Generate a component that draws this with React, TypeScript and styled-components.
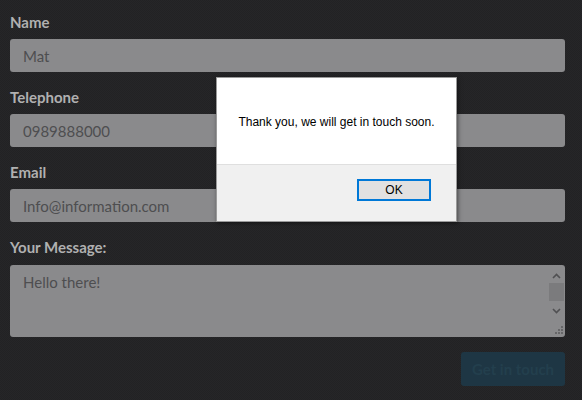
import React from "react";
import styled, { createGlobalStyle } from "styled-components";

const Global = createGlobalStyle`
  html, body { margin: 0; padding: 0; }
  body {
    background-color: #242426;
    background-image: repeating-conic-gradient(#262628 0 25%, #222224 0 50%);
    background-size: 2px 2px;
    width: 582px;
    height: 400px;
    overflow: hidden;
    font-family: "Lato", "Noto Sans", sans-serif;
  }
`;

const Page = styled.div`
  position: relative;
  width: 582px;
  height: 400px;
`;

const Form = styled.form`
  display: flex;
  flex-direction: column;
  padding: 12px 17px 0 10px;
`;

const Group = styled.div`
  display: flex;
  flex-direction: column;
  margin-bottom: 15px;
`;

const Label = styled.label`
  display: block;
  font-size: 15px;
  line-height: 20px;
  font-weight: 700;
  color: #b0b0b0;
  margin-bottom: 7px;
`;

const Input = styled.input`
  box-sizing: border-box;
  height: 33px;
  width: 100%;
  border: none;
  border-radius: 3px;
  background: #8a8a8c;
  padding: 0 13px;
  font-family: "Lato", "Noto Sans", sans-serif;
  font-size: 15px;
  color: #4e4e50;
  outline: none;
`;

const TextBox = styled.div`
  display: flex;
  height: 72px;
  border-radius: 3px;
  background: #8a8a8c;
  margin-top: 1px;
`;

const TextArea = styled.textarea`
  flex: 1;
  border: none;
  background: transparent;
  resize: none;
  padding: 8px 13px;
  font-family: "Lato", "Noto Sans", sans-serif;
  font-size: 15px;
  color: #4e4e50;
  outline: none;
`;

const ScrollCol = styled.div`
  width: 15px;
  margin-right: 1px;
  display: flex;
  flex-direction: column;
  padding-top: 3px;
`;

const Arrow = styled.div`
  height: 15px;
  display: flex;
  align-items: center;
  justify-content: center;
`;

const Thumb = styled.div`
  height: 18px;
  background: #7b7b7d;
`;

const Spacer = styled.div`
  flex: 1;
`;

const Grip = styled.div`
  height: 16px;
  display: flex;
  align-items: flex-end;
  justify-content: flex-end;
  padding: 0 1px 3px 0;
`;

const Actions = styled.div`
  display: flex;
  justify-content: flex-end;
`;

const SubmitButton = styled.button`
  width: 104px;
  height: 34px;
  border: none;
  border-radius: 3px;
  background: #1e3644;
  color: #233f4d;
  font-family: "Lato", "Noto Sans", sans-serif;
  font-size: 15px;
  font-weight: 700;
`;

const Dialog = styled.div`
  position: absolute;
  left: 216px;
  top: 77px;
  width: 239px;
  height: 143px;
  border: 1px solid #9a9a9a;
  background: #ffffff;
  box-shadow: 1px 1px 4px rgba(0, 0, 0, 0.5);
  display: flex;
  flex-direction: column;
  font-family: "Liberation Sans", Arial, sans-serif;
`;

const DialogBody = styled.div`
  height: 86px;
  display: flex;
  align-items: center;
  justify-content: center;
  font-size: 12px;
  color: #000;
  padding-top: 1px;
  box-sizing: border-box;
`;

const DialogFooter = styled.div`
  flex: 1;
  background: #f0f0f0;
  border-top: 1px solid #dfdfdf;
  display: flex;
  justify-content: flex-end;
  align-items: flex-start;
  padding: 14px 25px 0 0;
`;

const OkButton = styled.button`
  box-sizing: border-box;
  width: 74px;
  height: 22px;
  border: 2px solid #0078d7;
  background: #e1e1e1;
  font-family: "Liberation Sans", Arial, sans-serif;
  font-size: 12px;
  color: #000;
  padding: 0;
`;

const Chevron = ({ up }: { up?: boolean }) => (
  <svg width="9" height="6" viewBox="0 0 9 6">
    <path
      d={up ? "M1 5 L4.5 1.5 L8 5" : "M1 1 L4.5 4.5 L8 1"}
      fill="none"
      stroke="#505052"
      strokeWidth="1.6"
    />
  </svg>
);

const GripIcon = () => (
  <svg width="9" height="9" viewBox="0 0 9 9">
    {[
      [7, 1],
      [4, 4],
      [7, 4],
      [1, 7],
      [4, 7],
      [7, 7],
    ].map(([x, y], i) => (
      <rect key={i} x={x} y={y} width="2" height="2" fill="#666668" />
    ))}
  </svg>
);

export default function App() {
  return (
    <Page>
      <Global />
      <Form onSubmit={(e) => e.preventDefault()}>
        <Group>
          <Label>Name</Label>
          <Input defaultValue="Mat" />
        </Group>
        <Group>
          <Label>Telephone</Label>
          <Input defaultValue="0989888000" />
        </Group>
        <Group>
          <Label>Email</Label>
          <Input defaultValue="Info@information.com" />
        </Group>
        <Group>
          <Label>Your Message:</Label>
          <TextBox>
            <TextArea defaultValue="Hello there!" />
            <ScrollCol>
              <Arrow>
                <Chevron up />
              </Arrow>
              <Thumb />
              <Spacer />
              <Arrow>
                <Chevron />
              </Arrow>
              <Grip>
                <GripIcon />
              </Grip>
            </ScrollCol>
          </TextBox>
        </Group>
        <Actions>
          <SubmitButton type="submit">Get in touch</SubmitButton>
        </Actions>
      </Form>
      <Dialog>
        <DialogBody>Thank you, we will get in touch soon.</DialogBody>
        <DialogFooter>
          <OkButton>OK</OkButton>
        </DialogFooter>
      </Dialog>
    </Page>
  );
}
